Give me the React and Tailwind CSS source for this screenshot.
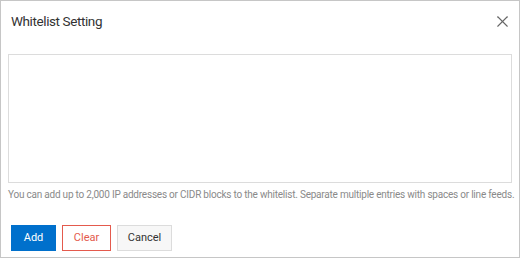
import { X } from 'lucide-react'

export default function App() {
  return (
    <div
      className="w-[520px] h-[258px] bg-white border border-[#c6c6c6] flex flex-col"
      style={{ fontFamily: 'Roboto, Lato, Arial, sans-serif' }}
    >
      <div className="flex items-center justify-between h-[40px] pl-[10px] pr-[7px] pt-[1px]">
        <h3 className="text-[13.5px] tracking-[-0.4px] text-[#333]">Whitelist Setting</h3>
        <button className="text-[#666]">
          <X size={19} strokeWidth={1.4} />
        </button>
      </div>

      <div className="px-[7px] pt-[13px]">
        <textarea className="block w-full h-[129px] border border-[#dcdcdc] resize-none focus:outline-none" />
        <p className="mt-[4px] text-[10px] leading-[16px] text-[#8a8a8a] tracking-[-0.22px] whitespace-nowrap">
          You can add up to 2,000 IP addresses or CIDR blocks to the whitelist. Separate multiple entries with spaces or line feeds.
        </p>
      </div>

      <div className="flex gap-[6px] pl-[10px] mt-[22px]">
        <button className="w-[45px] h-[26px] bg-[#0070cc] text-white text-[11px]">Add</button>
        <button className="w-[49px] h-[26px] border border-[#e45a4d] text-[#e45a4d] text-[11px]">Clear</button>
        <button className="w-[55px] h-[26px] border border-[#dcdcdc] bg-[#f7f7f7] text-[#333] text-[11px]">Cancel</button>
      </div>
    </div>
  )
}
